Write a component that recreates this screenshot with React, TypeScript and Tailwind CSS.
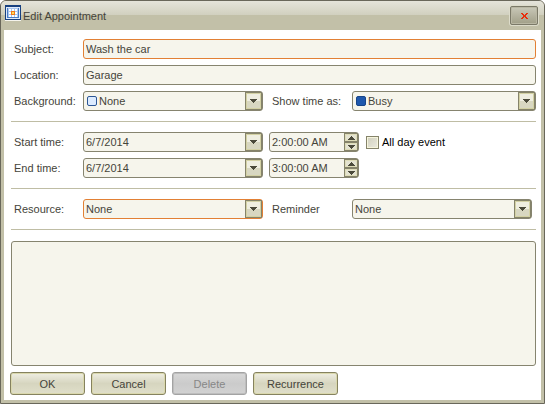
import React, { useState } from "react";

const frame = "flex h-5 items-stretch rounded-[3px] border bg-[#f6f5ec] focus-within:border-[#e28a3e]";
const grey = "border-[#86846f]";
const orange = "border-[#e28035]";
const box = "h-full min-w-0 flex-1 bg-transparent text-[11px] outline-none";
const arrowBox =
  "flex w-[17px] shrink-0 items-center justify-center border border-[#85836a] bg-linear-to-b from-[#efeee0] from-50% to-[#d8d7c1] to-50% shadow-[inset_0_0_0_1px_#d3d1a4]";
const action =
  "h-[23px] rounded-[3px] border border-[#85825f] bg-linear-to-b from-[#efeee2] via-[#d6d5bf] via-50% to-[#e0dfca] shadow-[inset_0_0_0_1px_#dad8ad] disabled:border-[#a3a3a3] disabled:from-[#d8d8d8] disabled:via-[#cbcbcb] disabled:to-[#d2d2d2] disabled:text-[#878787] disabled:shadow-[inset_0_0_0_1px_#bdbdbd]";

function Down() {
  return (
    <svg width="7" height="4" viewBox="0 0 7 4" fill="#4b4a3b" shapeRendering="crispEdges" aria-hidden="true">
      <path d="M0 0h7v1H0zM1 1h5v1H1zM2 2h3v1H2zM3 3h1v1H3z" />
    </svg>
  );
}

function Up() {
  return (
    <svg width="7" height="4" viewBox="0 0 7 4" fill="#4b4a3b" shapeRendering="crispEdges" aria-hidden="true">
      <path d="M3 0h1v1H3zM2 1h3v1H2zM1 2h5v1H1zM0 3h7v1H0z" />
    </svg>
  );
}

type ComboProps = {
  id: string;
  options: string[];
  border?: string;
  swatch?: string;
  className: string;
};

function Combo({ id, options, border = grey, swatch, className }: ComboProps) {
  return (
    <div className={`relative ${frame} ${border} ${className}`}>
      {swatch && (
        <span className={`pointer-events-none absolute top-1 left-[3px] size-[10px] rounded-[2px] border ${swatch}`} />
      )}
      <select id={id} className={`${box} appearance-none ${swatch ? "pl-[15px]" : "pl-[2px]"}`}>
        {options.map((o) => (
          <option key={o}>{o}</option>
        ))}
      </select>
      <span className={`pointer-events-none absolute inset-y-0 right-0 ${arrowBox}`}>
        <Down />
      </span>
    </div>
  );
}

function DateBox({ id }: { id: string }) {
  return (
    <div className={`${frame} ${grey} w-[180px]`}>
      <input id={id} type="text" defaultValue="6/7/2014" className={`${box} pl-[2px]`} />
      <button type="button" aria-label="Open calendar" className={arrowBox}>
        <Down />
      </button>
    </div>
  );
}

function TimeBox({ label, start }: { label: string; start: number }) {
  const [hour, setHour] = useState(start);
  const step = (by: number) => setHour((h) => ((h - 1 + by + 12) % 12) + 1);
  const half =
    "flex flex-1 items-center justify-center border border-[#85836a] bg-[#e4e3d1] shadow-[inset_0_0_0_1px_#dedcb8]";
  return (
    <div className={`${frame} ${grey} ml-[6px] w-[90px]`}>
      <input type="text" readOnly aria-label={label} value={`${hour}:00:00 AM`} className={`${box} pl-[2px]`} />
      <div className="flex w-[14px] shrink-0 flex-col">
        <button type="button" aria-label="Later" onClick={() => step(1)} className={half}>
          <Up />
        </button>
        <button type="button" aria-label="Earlier" onClick={() => step(-1)} className={half}>
          <Down />
        </button>
      </div>
    </div>
  );
}

function Row({ id, label, children }: { id: string; label: string; children: React.ReactNode }) {
  return (
    <div className="flex items-center pl-[3px]">
      <label htmlFor={id} className="w-[69px] shrink-0">
        {label}
      </label>
      {children}
    </div>
  );
}

function Rule() {
  return <hr className="my-[10px] border-[#bfbda4]" />;
}

export default function App() {
  return (
    <form
      onSubmit={(e) => e.preventDefault()}
      className="flex min-h-screen flex-col rounded-t-md border border-[#69675a] bg-[#c2c0a8] px-[3px] pb-[3px] font-['Liberation_Sans',Arial,sans-serif] text-[11px] leading-4 text-[#45443a]"
    >
      <header className="-mx-[3px] flex h-[29px] items-start rounded-t-[5px] bg-linear-to-b from-[#e5e4da] to-[#d1d0bf] pr-[6px] pl-1 [background-size:100%_14px] bg-no-repeat">
        <svg width="16" height="16" viewBox="0 0 16 16" shapeRendering="crispEdges" className="mt-1" aria-hidden="true">
          <path fill="#17407f" d="M0 0h16v15H0z" />
          <path fill="#dfeafa" d="M1 2h14v12H1z" />
          <path fill="#4a7cc4" d="M2 3h12v10H2z" />
          <path fill="#a9c6ef" d="M3 3h10v9H3z" />
          <path
            fill="#fff"
            d="M4 4h2v2H4zM7 4h2v2H7zM10 4h2v2h-2zM4 7h2v2H4zM10 7h2v2h-2zM4 10h2v2H4zM7 10h2v2H7zM10 10h2v2h-2z"
          />
          <path fill="#f37a18" d="M6 6h4v4H6z" />
          <path fill="#ffd95a" d="M7 7h2v2H7z" />
          <path fill="#f5f4ed" d="M0 15h16v1H0z" />
        </svg>
        <h1 className="mt-[7px] ml-[2px] flex-1">Edit Appointment</h1>
        <button
          type="button"
          aria-label="Close"
          className="mt-[5px] flex h-[19px] w-7 items-center justify-center rounded-[2px] border border-[#7b7968] bg-linear-to-b from-[#c9c8b8] to-[#a19f88] shadow-[inset_0_0_0_1px_#b9b7a3,0_0_0_1px_#dddccb]"
        >
          <svg width="7" height="6" viewBox="0 0 7 6" fill="#e92c0c" shapeRendering="crispEdges" aria-hidden="true">
            <path d="M0 0h2v1H0zM5 0h2v1H5zM1 1h2v1H1zM4 1h2v1H4zM2 2h3v2H2zM1 4h2v1H1zM4 4h2v1H4zM0 5h2v1H0zM5 5h2v1H5z" />
          </svg>
        </button>
      </header>

      <main className="flex flex-1 flex-col bg-white pt-[9px] pr-[5px] pb-[5px] pl-[7px]">
        <div className="flex flex-col gap-[6px]">
          <Row id="subject" label="Subject:">
            <div className={`${frame} ${orange} flex-1`}>
              <input id="subject" type="text" defaultValue="Wash the car" className={`${box} pl-[2px]`} />
            </div>
          </Row>
          <Row id="location" label="Location:">
            <div className={`${frame} ${grey} flex-1`}>
              <input id="location" type="text" defaultValue="Garage" className={`${box} pl-[2px]`} />
            </div>
          </Row>
          <Row id="background" label="Background:">
            <Combo
              id="background"
              options={["None", "Important", "Business", "Personal"]}
              swatch="border-[#2c5695] bg-[#dcebff]"
              className="w-[180px]"
            />
            <label htmlFor="show" className="ml-[9px] w-20 shrink-0">
              Show time as:
            </label>
            <Combo
              id="show"
              options={["Busy", "Free", "Tentative"]}
              swatch="border-[#174589] bg-[#1f58ad]"
              className="flex-1"
            />
          </Row>
        </div>

        <Rule />

        <div className="flex flex-col gap-[6px]">
          <Row id="start" label="Start time:">
            <DateBox id="start" />
            <TimeBox label="Start hour" start={2} />
            <label className="ml-[7px] flex items-center gap-[3px] text-black">
              <input
                type="checkbox"
                className="size-[13px] appearance-none border border-[#85836a] bg-linear-to-br from-[#d0cfbd] to-[#ebeadf] shadow-[inset_0_0_0_1px_#f6f5dc] checked:bg-[#6b6955]"
              />
              All day event
            </label>
          </Row>
          <Row id="end" label="End time:">
            <DateBox id="end" />
            <TimeBox label="End hour" start={3} />
          </Row>
        </div>

        <Rule />

        <Row id="resource" label="Resource:">
          <Combo id="resource" options={["None"]} border={orange} className="w-[180px]" />
          <label htmlFor="reminder" className="ml-[9px] w-20 shrink-0">
            Reminder
          </label>
          <Combo id="reminder" options={["None", "5 minutes"]} className="mr-1 flex-1" />
        </Row>

        <Rule />

        <textarea
          aria-label="Description"
          className="mt-px min-h-[124px] w-full flex-1 resize-none rounded-[3px] border border-[#86846f] bg-[#f6f5ec] p-1 outline-none"
        />

        <div className="-ml-px flex gap-[6px] pt-[6px]">
          <button type="submit" className={`${action} w-[75px]`}>
            OK
          </button>
          <button type="button" className={`${action} w-[75px]`}>
            Cancel
          </button>
          <button type="button" disabled className={`${action} w-[75px]`}>
            Delete
          </button>
          <button type="button" className={`${action} w-[85px]`}>
            Recurrence
          </button>
        </div>
      </main>
    </form>
  );
}
